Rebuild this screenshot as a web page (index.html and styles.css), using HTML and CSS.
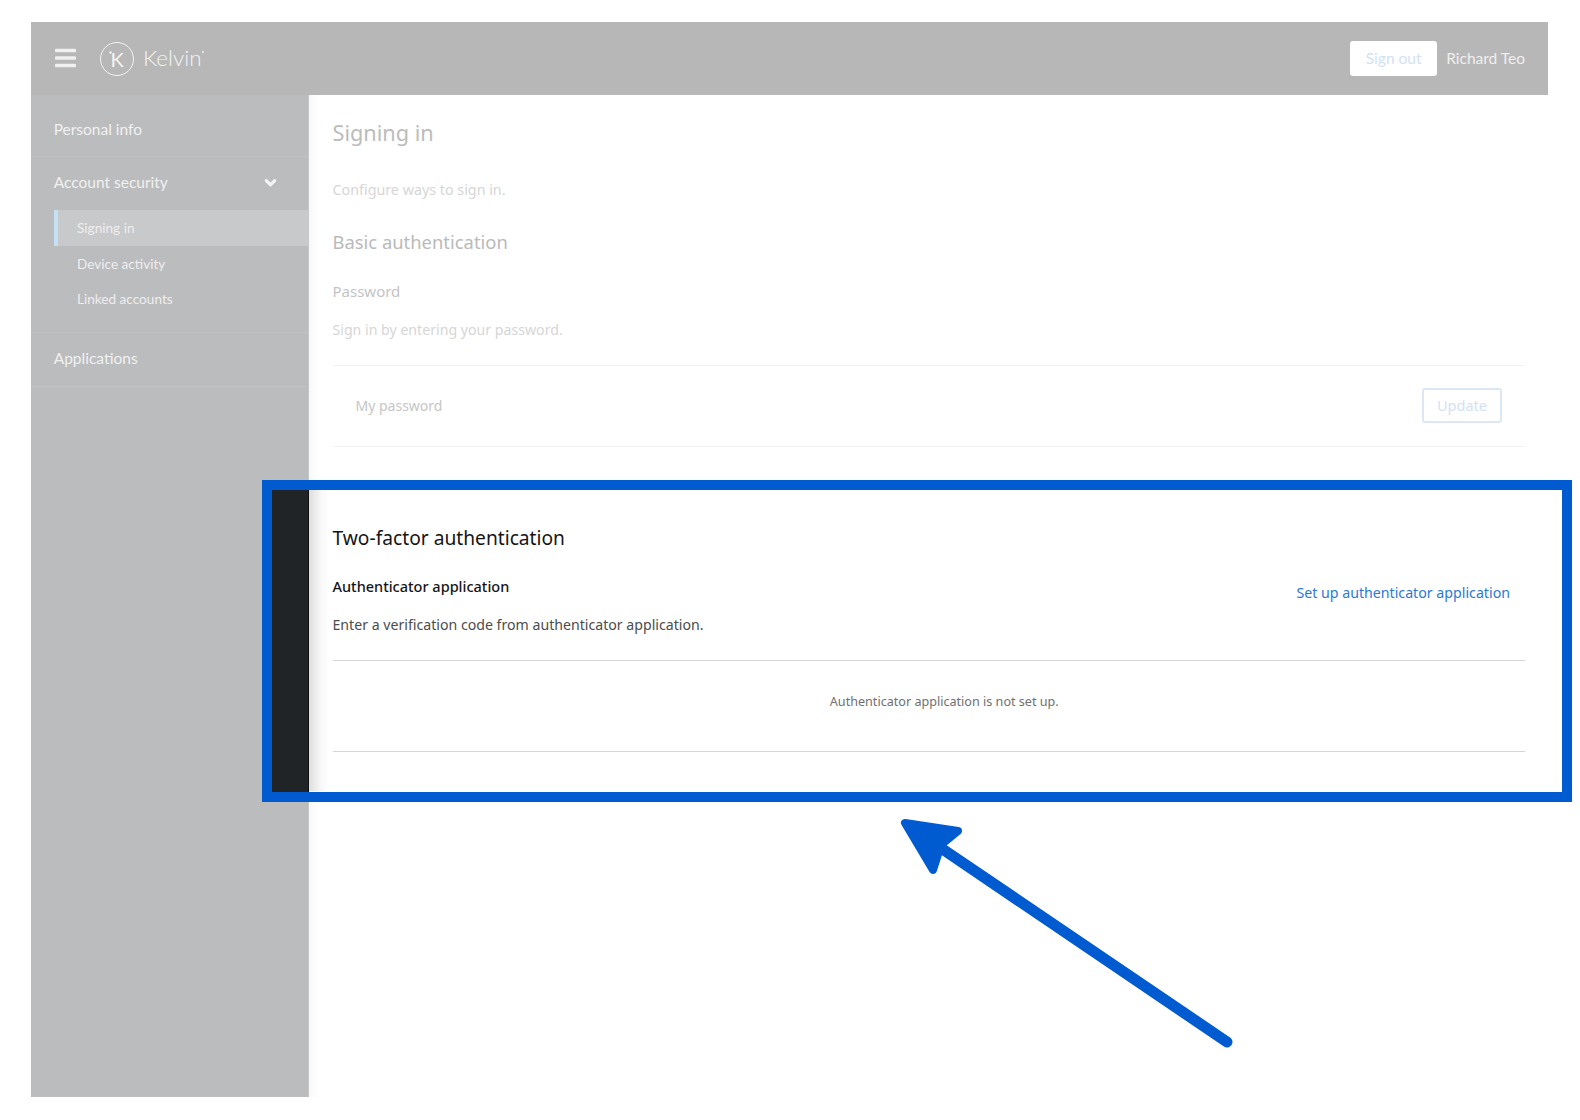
FILE: index.html
```html
<!DOCTYPE html>
<html lang="en">
<head>
<meta charset="utf-8">
<title>Kelvin - Signing in</title>
<link rel="stylesheet" href="styles.css">
</head>
<body>
<div class="frame">
  <header class="topbar">
    <svg class="burger" viewBox="0 0 21 20" width="21" height="20"><path d="M1.5 2.5h18M1.5 10h18M1.5 17.5h18" fill="none" stroke="#f0f0f0" stroke-width="3.6" stroke-linecap="round"/></svg>
    <div class="logo">
      <div class="logo-mark">K<svg class="logo-dot" viewBox="0 0 3 3" width="3" height="3"><circle cx="1.5" cy="1.5" r="1.2" fill="#f4f4f4"/></svg></div>
      <span class="logo-word">Kelvin<svg class="word-dot" viewBox="0 0 3 3" width="2" height="2"><circle cx="1.5" cy="1.5" r="1.4" fill="#f4f4f4"/></svg></span>
    </div>
    <div class="spacer"></div>
    <button class="signout">Sign out</button>
    <span class="user">Richard Teo</span>
  </header>
  <div class="content">
    <nav class="sidebar">
      <div class="nav-group nav-first"><a class="nav-item">Personal info</a></div>
      <div class="nav-group nav-security">
        <a class="nav-item nav-expand">Account security
          <svg class="chevron" viewBox="0 0 14 10" width="13" height="10"><path d="M2.5 2.5l4.500 4.500 4.500-4.500" fill="none" stroke="#f4f4f4" stroke-width="3.400" stroke-linecap="round" stroke-linejoin="round"/></svg>
        </a>
        <ul class="subnav">
          <li class="sub-item sub-active">Signing in</li>
          <li class="sub-item">Device activity</li>
          <li class="sub-item">Linked accounts</li>
        </ul>
      </div>
      <div class="nav-group nav-apps"><a class="nav-item">Applications</a></div>
    </nav>
    <main class="main">
      <h1 class="title">Signing in</h1>
      <p class="lead">Configure ways to sign in.</p>
      <h2 class="heading dim">Basic authentication</h2>
      <h3 class="label dim">Password</h3>
      <p class="desc dim-more">Sign in by entering your password.</p>
      <div class="pw-row">
        <span class="pw-name">My password</span>
        <button class="update">Update</button>
      </div>
      <section class="tfa">
        <h2 class="heading">Two-factor authentication</h2>
        <div class="tfa-row">
          <div>
            <h3 class="label">Authenticator application</h3>
            <p class="desc">Enter a verification code from authenticator application.</p>
          </div>
          <a class="setup">Set up authenticator application</a>
        </div>
        <div class="empty">Authenticator application is not set up.</div>
      </section>
    </main>
  </div>
</div>
<div class="highlight"><div class="strip"></div></div>
<svg class="arrow" viewBox="880 800 370 260" width="370" height="260">
  <path d="M1227 1042L938 846" fill="none" stroke="#005bd1" stroke-width="11" stroke-linecap="round"/>
  <path d="M905 823L958 831L941 845L933 870Z" fill="#005bd1" stroke="#005bd1" stroke-width="8" stroke-linejoin="round"/>
</svg>
</body>
</html>
```
FILE: styles.css
```css
* { box-sizing: border-box; }
html, body { margin: 0; padding: 0; height: 100%; background: #fff; overflow: hidden; }
body { position: relative; padding: 22px 0 0 31px; font-family: "Noto Sans", "Liberation Sans", sans-serif; }
h1, h2, h3, p, ul { margin: 0; padding: 0; font-weight: 400; }
ul { list-style: none; }

.frame { width: 1517px; height: 1075px; display: flex; flex-direction: column; }
.topbar { height: 73px; background: #b7b7b7; display: flex; align-items: center; padding: 0 23px 0 24px; color: #f2f2f2; flex: none; }
.burger { margin-top: -1px; flex: none; }
.logo { display: flex; align-items: center; margin-left: 24px; }
.logo-mark { position: relative; width: 34px; height: 34px; border: 1.5px solid #f4f4f4; border-radius: 50%; display: flex; align-items: center; justify-content: center; font: 400 20px/1 Lato, sans-serif; color: #f4f4f4; }
.logo-dot { position: absolute; left: 8px; top: 8px; }
.logo-word { position: relative; margin-left: 9px; font: 300 22.4px/1 Lato, sans-serif; color: #f4f4f4; }
.word-dot { position: absolute; right: -2px; top: 4px; }
.spacer { flex: 1; }
.signout { width: 87px; height: 35px; border: 0; border-radius: 3px; background: #fff; color: #d2e1f6; font: 400 15.5px/1 Lato, sans-serif; padding: 0; }
.user { margin-left: 9px; font: 400 15.5px/1 Lato, sans-serif; color: #efefef; }

.content { flex: 1; display: flex; min-height: 0; }
.sidebar { width: 278px; flex: none; background: #bbbcbe; color: #f1f1f1; font: 400 15.5px/20px Lato, sans-serif; box-shadow: inset -1px 0 0 #c6c6c7; }
.nav-group { border-bottom: 1px solid #c2c3c5; }
.nav-item { display: block; padding-left: 22.7px; position: relative; }
.nav-first { padding: 24px 0 17px; }
.nav-security { padding: 15px 0 16px; }
.nav-apps { padding: 15px 0 18px; }
.chevron { position: absolute; left: 233px; top: 6px; }
.subnav { margin: 18px 0 0 23px; font-size: 13.6px; }
.sub-item { height: 35px; line-height: 37px; padding-left: 23px; color: #eeeeee; }
.sub-active { height: 36px; background: #c8c9cb; border-left: 4px solid #c3e0f5; padding-left: 19px; }

.main { flex: 1; background: #fff; padding: 20px 23px 0 23.5px; color: #d4d4d4; box-shadow: inset 10px 0 14px -10px rgba(0,0,0,.06); min-width: 0; }
.title { font-size: 21.7px; line-height: 36px; color: #bcbcbc; }
.lead { margin-top: 28px; font-size: 14.3px; line-height: 22px; color: #d6d6d6; }
.heading { margin-top: 27px; font-size: 19.2px; line-height: 28px; color: #151515; }
.heading.dim { font-size: 18.4px; color: #bababa; }
.label { margin-top: 25px; font-size: 14.5px; line-height: 20px; color: #151515; font-weight: 500; }
.label.dim { font-size: 15px; color: #c4c4c4; font-weight: 400; }
.desc { margin-top: 19px; font-size: 14.15px; line-height: 20px; color: #4c4c4c; }
.desc.dim-more { margin-top: 19px; color: #d6d6d6; }
.pw-row { margin-top: 25px; height: 82px; border-top: 1px solid #f3f3f3; border-bottom: 1px solid #f3f3f3; display: flex; align-items: center; justify-content: space-between; padding: 0 23px 1px; font-size: 14px; color: #c6c6c6; }
.update { width: 80px; height: 35px; background: #fff; border: 2px solid #dce7f6; border-radius: 3px; color: #d2e1f6; font: 400 14.5px/1 "Noto Sans", sans-serif; padding: 0; }

.tfa { margin: 43px -23px 0 -23.5px; padding: 34px 23px 39px 23.5px; background: linear-gradient(to right, #dedede, #f8f8f8 12px, #fff 20px); }
.tfa > .heading { margin-top: 0; }
.tfa-row { display: flex; justify-content: space-between; margin-top: 24px; }
.tfa-row .label { margin-top: 0; }
.setup { margin: 7px 15px 0 0; font-size: 14.2px; line-height: 20px; color: #2b78d6; }
.empty { margin-top: 25px; height: 92px; border-top: 1px solid #d6d6d6; border-bottom: 1px solid #d6d6d6; padding: 31px 0 0 31px; text-align: center; font-size: 12.6px; line-height: 20px; color: #707070; }

.highlight { position: absolute; left: 262px; top: 480px; width: 1310px; height: 322px; border: 10px solid #005bd1; }
.strip { width: 37px; height: 100%; background: #212427; border-right: 1px solid #111; }
.arrow { position: absolute; left: 880px; top: 800px; }
```
